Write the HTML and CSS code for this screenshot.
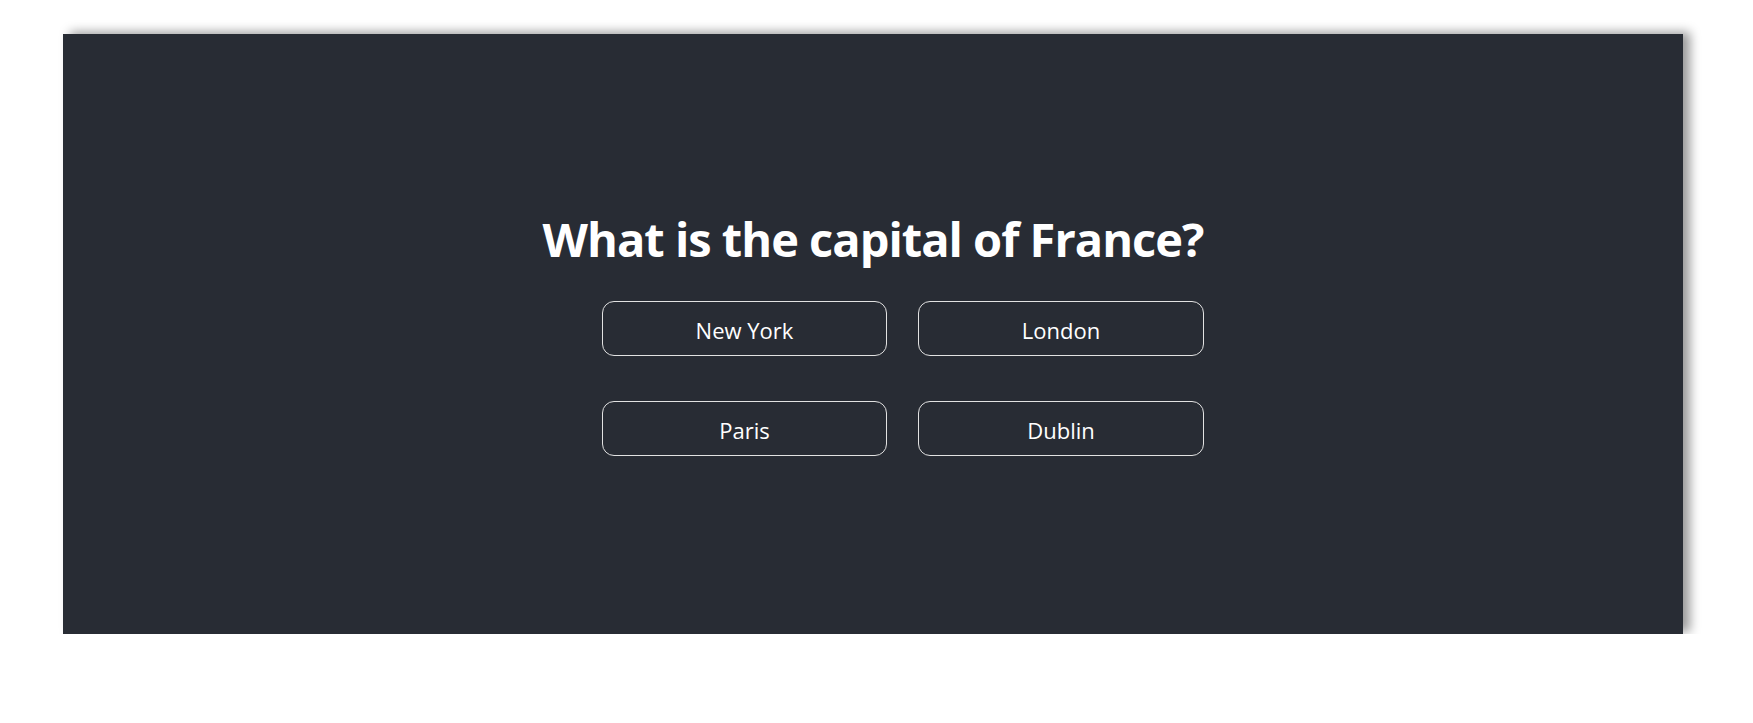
FILE: index.html
```html
<!DOCTYPE html>
<html lang="en">
<head>
<meta charset="utf-8">
<title>Quiz</title>
<link rel="stylesheet" href="styles.css">
</head>
<body>
  <main class="panel">
    <h1 class="question">What is the capital of France?</h1>
    <div class="answers">
      <button class="answer">New York</button>
      <button class="answer">London</button>
      <button class="answer">Paris</button>
      <button class="answer">Dublin</button>
    </div>
  </main>
</body>
</html>
```
FILE: styles.css
```css
html, body {
  margin: 0;
  padding: 0;
  background: #ffffff;
}

body {
  padding: 34px 70px 0 63px;
  font-family: "Open Sans", "Noto Sans", sans-serif;
}

.panel {
  box-sizing: border-box;
  width: 1620px;
  height: 600px;
  background: #282c34;
  box-shadow: 7px -2px 10px rgba(0, 0, 0, 0.4);
  display: flex;
  flex-direction: column;
  align-items: center;
  padding-top: 175px;
}

.question {
  margin: 0;
  color: #ffffff;
  font-weight: 700;
  font-size: 47px;
  line-height: 60px;
  letter-spacing: -1px;
}

.answers {
  display: grid;
  grid-template-columns: 285px 286px;
  column-gap: 31px;
  row-gap: 45px;
  margin-top: 32px;
  margin-left: 60px;
}

.answer {
  box-sizing: border-box;
  height: 55px;
  background: transparent;
  border: 1px solid #e2e2e2;
  border-radius: 12px;
  color: #ffffff;
  font-family: "Open Sans", "Noto Sans", sans-serif;
  font-size: 22px;
  padding: 3px 0 0;
}
```
